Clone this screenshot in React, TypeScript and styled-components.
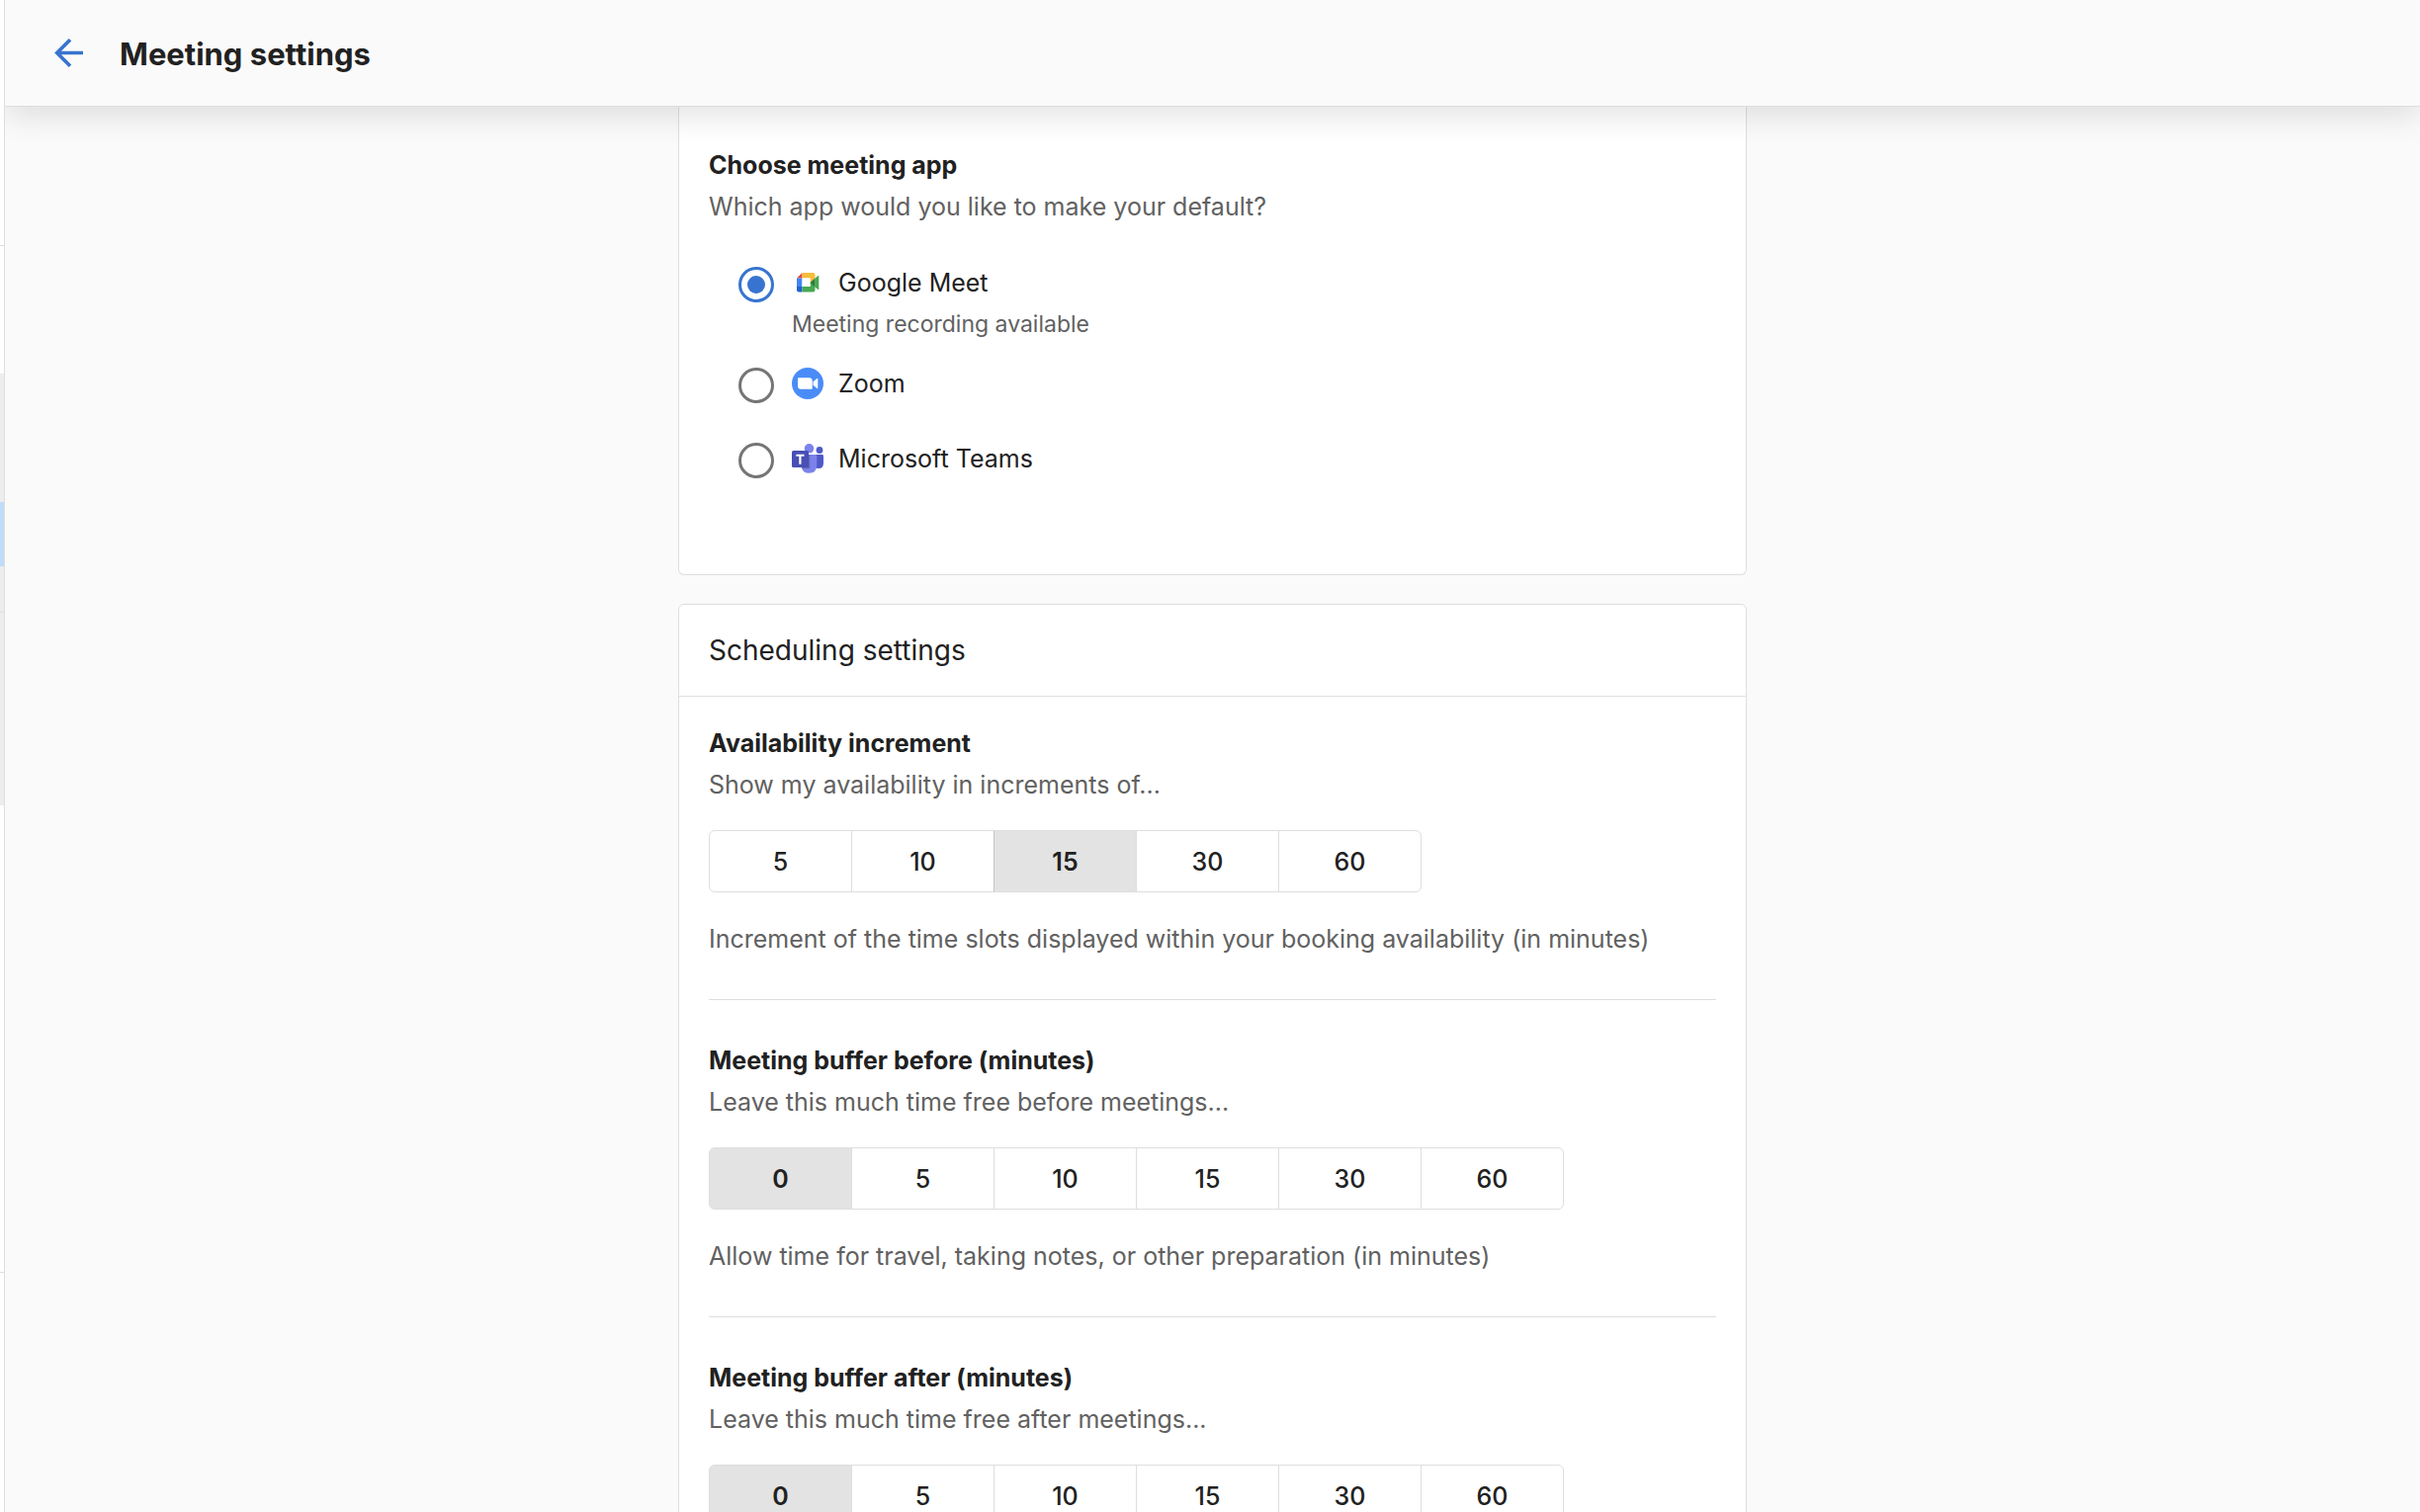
import React, { useState } from 'react';
import styled, { createGlobalStyle } from 'styled-components';

const GlobalStyle = createGlobalStyle`
  *, *::before, *::after { box-sizing: border-box; }
  body {
    margin: 0;
    background: #fafafa;
    color: #212121;
    font-family: Inter, "Liberation Sans", sans-serif;
    font-size: 25px;
    line-height: 42px;
  }
`;

const Shell = styled.div`
  display: flex;
  height: 100vh;
  overflow: hidden;
`;

const SidebarEdge = styled.aside`
  flex: none;
  display: flex;
  flex-direction: column;
  width: 5px;
  background: #fff;
  border-right: 1px solid #dedede;
`;

const EdgeBlock = styled.div<{ $height: number; $color: string }>`
  flex: none;
  height: ${(p) => p.$height}px;
  background: ${(p) => p.$color};
`;

const Page = styled.div`
  flex: 1;
  min-width: 0;
  display: flex;
  flex-direction: column;
  overflow: hidden;
`;

const Header = styled.header`
  position: relative;
  z-index: 1;
  flex: none;
  display: flex;
  align-items: center;
  gap: 32px;
  height: 108px;
  padding: 0 45px;
  background: #fafafa;
  border-bottom: 1px solid #dedede;
  box-shadow: 0 8px 32px rgba(0, 0, 0, 0.12);
`;

const BackButton = styled.button`
  display: grid;
  place-items: center;
  width: 39px;
  height: 39px;
  padding: 0;
  border: 0;
  background: none;
  color: #3874cf;
  cursor: pointer;
`;

const PageTitle = styled.h1`
  margin: 0;
  padding-top: 2px;
  font-size: 31px;
  font-weight: 700;
`;

const Scroller = styled.main`
  flex: 1;
  min-height: 0;
  padding: 0 24px;
  overflow-y: auto;
  scrollbar-width: none;
`;

const Column = styled.div`
  display: flex;
  flex-direction: column;
  gap: 29px;
  max-width: 1081px;
  margin: 0 auto;
`;

const Card = styled.section<{ $continued?: boolean }>`
  background: #fff;
  border: 1px solid #dedede;
  border-radius: 6px;
  ${(p) => p.$continued && 'border-top: 0; border-top-left-radius: 0; border-top-right-radius: 0;'}
`;

const CardHeader = styled.div`
  display: flex;
  align-items: center;
  height: 93px;
  padding: 0 30px;
  border-bottom: 1px solid #dedede;
`;

const CardTitle = styled.h2`
  margin: 0;
  font-size: 28px;
  font-weight: 400;
`;

const AppCardBody = styled.div`
  padding: 38px 30px 80px;
`;

const SettingsBody = styled.div`
  padding: 26px 30px 40px;
`;

const Setting = styled.div`
  & + & {
    margin-top: 40px;
    padding-top: 40px;
    border-top: 1px solid #dedede;
  }
`;

const SettingTitle = styled.h3`
  margin: 0;
  font-size: 25px;
  font-weight: 700;
`;

const Hint = styled.p`
  margin: 0;
  color: #616161;
`;

const AppList = styled.div`
  display: flex;
  flex-direction: column;
  gap: 18px;
  padding: 35px 30px 0;
`;

const AppOption = styled.label`
  display: grid;
  grid-template-columns: 36px 32px 1fr;
  grid-auto-rows: 42px;
  align-items: center;
  column-gap: 18px;
  min-height: 58px;
  cursor: pointer;
`;

const Radio = styled.input`
  appearance: none;
  display: grid;
  place-items: center;
  align-self: end;
  width: 36px;
  height: 36px;
  margin: 0 0 1px;
  border: 3px solid #757575;
  border-radius: 50%;
  background: #fff;

  &:checked { border-color: #3874cf; }
  &:checked::before {
    content: '';
    width: 18px;
    height: 18px;
    border-radius: 50%;
    background: #3874cf;
  }
`;

const AppName = styled.span`
  margin-left: -3px;
`;

const AppNote = styled.span`
  grid-column: 2 / -1;
  font-size: 23px;
  color: #616161;
`;

const Segments = styled.div`
  display: flex;
  margin: 25px 0 26px;
`;

const Segment = styled.button`
  width: 145px;
  height: 63px;
  padding: 0;
  border: 1px solid #dedede;
  background: #fff;
  color: #212121;
  font: inherit;
  font-weight: 500;
  cursor: pointer;

  & + & { margin-left: -1px; }
  &:first-child { border-radius: 6px 0 0 6px; }
  &:last-child { border-radius: 0 6px 6px 0; }
  &[aria-pressed='true'] {
    background: #e3e3e3;
    font-weight: 600;
  }
  & + &[aria-pressed='true'] { border-left-color: #c6c6c6; }
`;

const BackIcon = () => (
  <svg width="29" height="29" viewBox="0 0 29 29" fill="none" stroke="currentColor" strokeWidth="3.6" aria-hidden="true">
    <path d="M29 14.500H3M16 1.200L2.700 14.500L16 27.800" />
  </svg>
);

const MeetIcon = () => (
  <svg width="32" height="32" viewBox="0 0 32 32" aria-hidden="true">
    <path d="M10.500 6v5.500H5z" fill="#e2453b" />
    <path d="M5 11.500h5.500v9H5z" fill="#4285f4" />
    <path d="M5 20h5.500v5.500H7Q5 25.500 5 23.500z" fill="#1f62cf" />
    <path d="M10.500 6H21.500q2 0 2 2v4l-5 4v-4.500h-8z" fill="#f6bc3c" />
    <path d="M10.500 20h8v-4l5-4v11.500q0 2-2 2H10.500z" fill="#48a852" />
    <path d="M10.500 11.500h8v8.500h-8z" fill="#fff" />
    <path d="M18.500 16L23.500 11.500v9z" fill="#2d7d3a" />
    <path d="M23.500 11.500L26.500 9q.8-.5.8.4v13.200q0 .9-.8.4L23.500 20.500z" fill="#48a852" />
  </svg>
);

const ZoomIcon = () => (
  <svg width="32" height="32" viewBox="0 0 32 32" aria-hidden="true">
    <circle cx="16" cy="16" r="16" fill="#4a8cf7" />
    <path d="M6 11q0-.8.800-.8h10.700q3.200 0 3.200 3.200V21q0 .8-.8.800H9.200Q6 21.800 6 18.600z" fill="#fff" />
    <path d="M21.500 14.300l4-3.300q.8-.5.8.4v9.200q0 .9-.8.4l-4-3.300z" fill="#fff" />
  </svg>
);

const TeamsIcon = () => (
  <svg width="32" height="32" viewBox="0 0 32 32" aria-hidden="true">
    <circle cx="28" cy="7.500" r="3.400" fill="#5059c9" />
    <path d="M22 12h8.600q1.400 0 1.400 1.400v7.100q0 5.500-5 5.500t-5-5z" fill="#5059c9" />
    <circle cx="17.500" cy="5.800" r="4.800" fill="#7b83eb" />
    <path d="M10 12h14q1.300 0 1.300 1.400v9.100q0 8.300-8 8.300-6 0-7.300-5.300z" fill="#7b83eb" />
    <path d="M10 12h8.300v12.800q0 1.400-1.300 1.400h-6.800Q10 25 10 23z" fill="#000" opacity=".2" />
    <rect y="8" width="17" height="17" rx="1.500" fill="#484fb5" />
    <path d="M4.300 11.800h8.200v2H9.500v8H7.300v-8h-3z" fill="#fff" />
  </svg>
);

const edgeBlocks: [number, string][] = [
  [248, '#fff'],
  [1, '#dedede'],
  [129, '#fff'],
  [130, '#ededed'],
  [65, '#bfdcf8'],
  [46, '#ededed'],
  [1, '#dedede'],
  [195, '#ededed'],
  [472, '#fff'],
  [1, '#dedede'],
];

const apps = [
  { id: 'meet', name: 'Google Meet', note: 'Meeting recording available', Icon: MeetIcon },
  { id: 'zoom', name: 'Zoom', Icon: ZoomIcon },
  { id: 'teams', name: 'Microsoft Teams', Icon: TeamsIcon },
];

const settings = [
  {
    title: 'Availability increment',
    hint: 'Show my availability in increments of...',
    options: [5, 10, 15, 30, 60],
    initial: 15,
    help: 'Increment of the time slots displayed within your booking availability (in minutes)',
  },
  {
    title: 'Meeting buffer before (minutes)',
    hint: 'Leave this much time free before meetings...',
    options: [0, 5, 10, 15, 30, 60],
    initial: 0,
    help: 'Allow time for travel, taking notes, or other preparation (in minutes)',
  },
  {
    title: 'Meeting buffer after (minutes)',
    hint: 'Leave this much time free after meetings...',
    options: [0, 5, 10, 15, 30, 60],
    initial: 0,
  },
];

type SettingProps = { title: string; hint: string; options: number[]; initial: number; help?: string };

function MinutesSetting({ title, hint, options, initial, help }: SettingProps) {
  const [value, setValue] = useState(initial);
  return (
    <Setting>
      <SettingTitle>{title}</SettingTitle>
      <Hint>{hint}</Hint>
      <Segments role="group" aria-label={title}>
        {options.map((n) => (
          <Segment key={n} type="button" aria-pressed={n === value} onClick={() => setValue(n)}>
            {n}
          </Segment>
        ))}
      </Segments>
      {help && <Hint>{help}</Hint>}
    </Setting>
  );
}

export default function App() {
  const [app, setApp] = useState('meet');
  return (
    <Shell>
      <GlobalStyle />
      <SidebarEdge>
        {edgeBlocks.map(([height, color], i) => (
          <EdgeBlock key={i} $height={height} $color={color} />
        ))}
      </SidebarEdge>
      <Page>
        <Header>
          <BackButton type="button" aria-label="Back">
            <BackIcon />
          </BackButton>
          <PageTitle>Meeting settings</PageTitle>
        </Header>
        <Scroller>
          <Column>
            <Card $continued>
              <AppCardBody>
                <SettingTitle>Choose meeting app</SettingTitle>
                <Hint>Which app would you like to make your default?</Hint>
                <AppList role="radiogroup" aria-label="Choose meeting app">
                  {apps.map(({ id, name, note, Icon }) => (
                    <AppOption key={id}>
                      <Radio type="radio" name="app" value={id} checked={app === id} onChange={() => setApp(id)} />
                      <Icon />
                      <AppName>{name}</AppName>
                      {note && <AppNote>{note}</AppNote>}
                    </AppOption>
                  ))}
                </AppList>
              </AppCardBody>
            </Card>
            <Card>
              <CardHeader>
                <CardTitle>Scheduling settings</CardTitle>
              </CardHeader>
              <SettingsBody>
                {settings.map((s) => (
                  <MinutesSetting key={s.title} {...s} />
                ))}
              </SettingsBody>
            </Card>
          </Column>
        </Scroller>
      </Page>
    </Shell>
  );
}
